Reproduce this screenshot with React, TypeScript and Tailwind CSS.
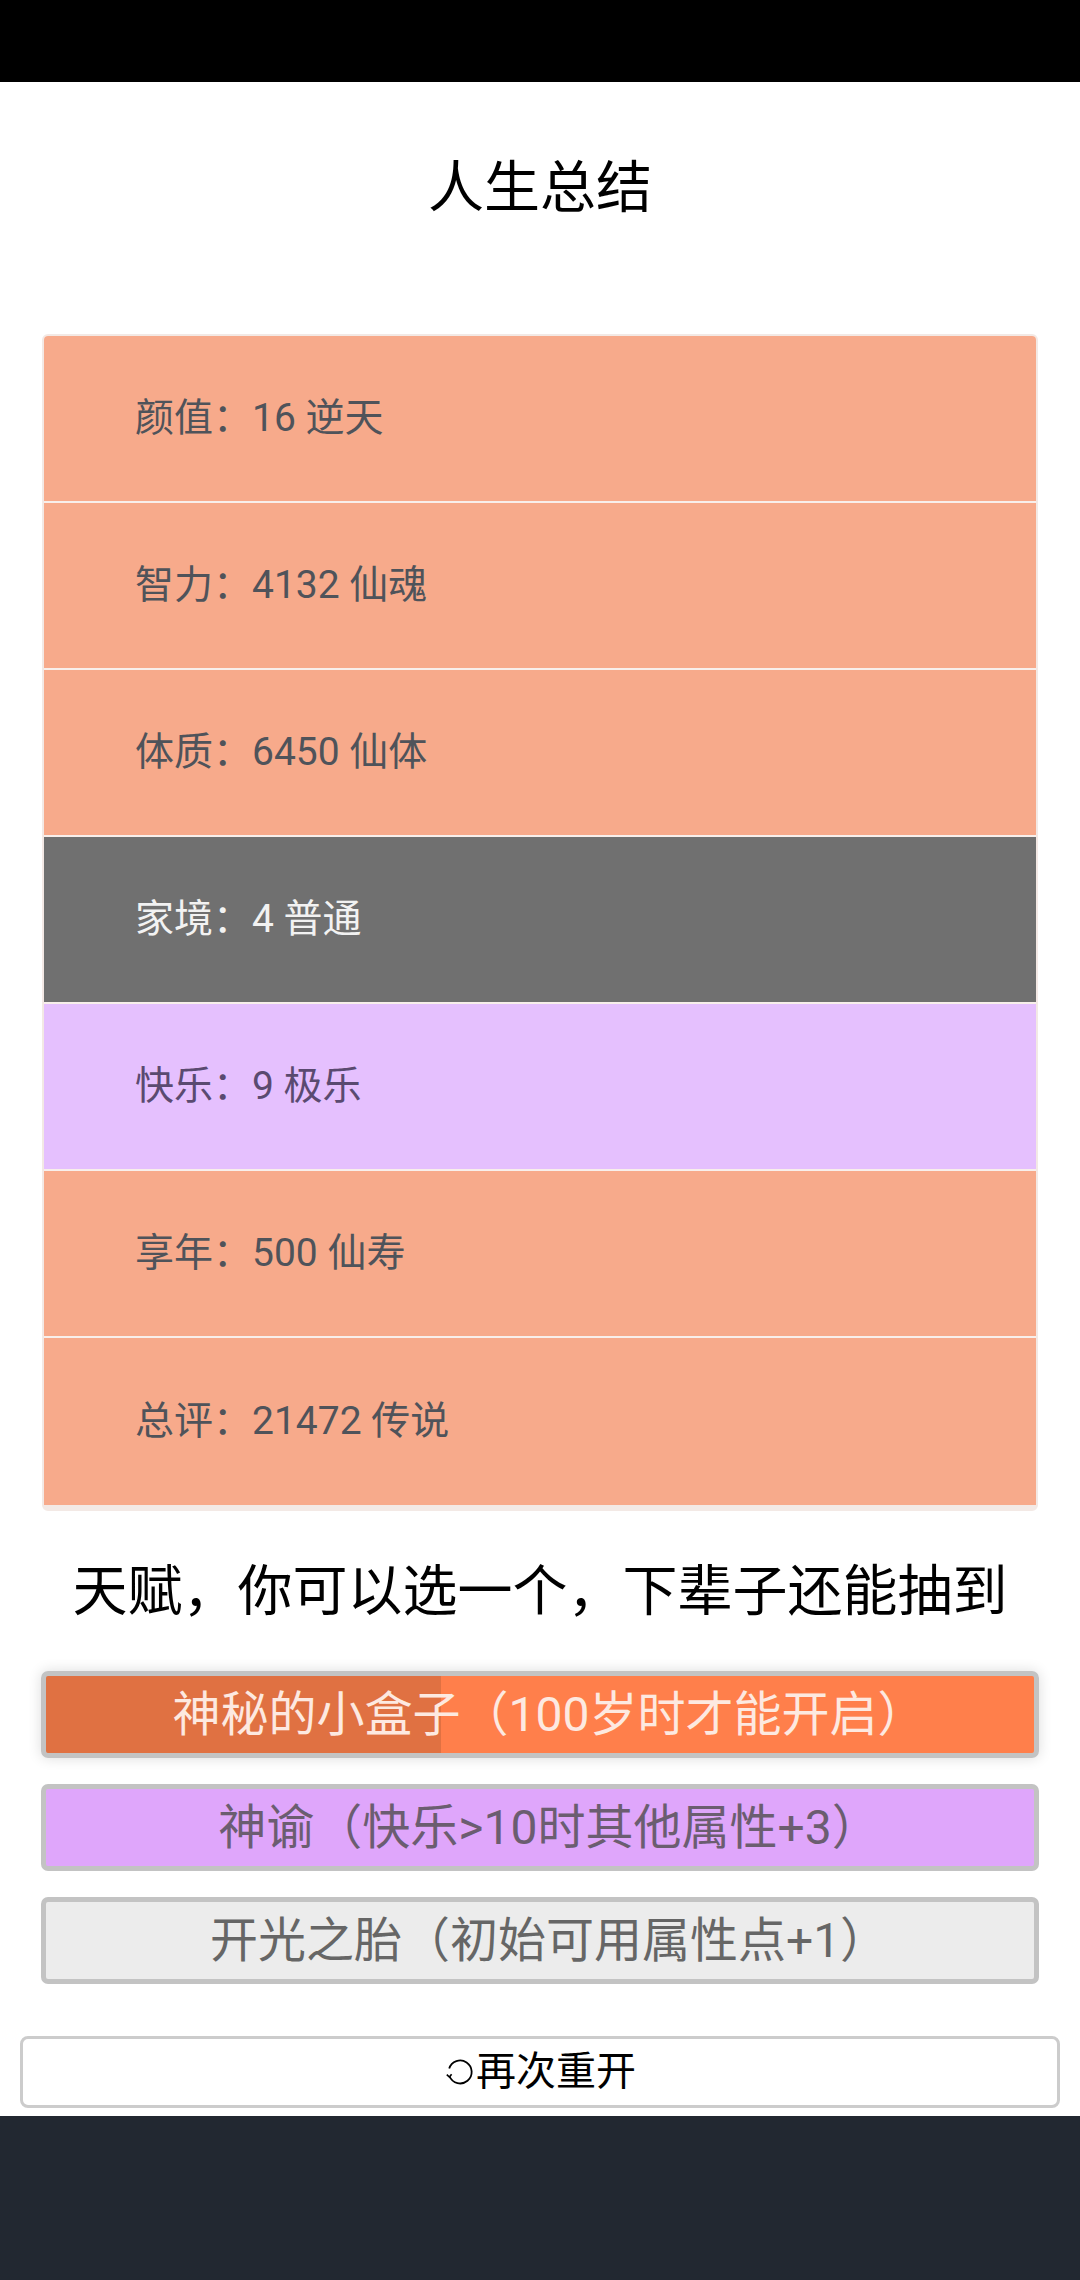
import React from "react";

const rows: { label: string; bg: string; text: string }[] = [
  { label: "颜值：16 逆天", bg: "bg-[#f7aa8b]", text: "text-[#4f535a]" },
  { label: "智力：4132 仙魂", bg: "bg-[#f7aa8b]", text: "text-[#4f535a]" },
  { label: "体质：6450 仙体", bg: "bg-[#f7aa8b]", text: "text-[#4f535a]" },
  { label: "家境：4 普通", bg: "bg-[#707070]", text: "text-[#f2f2f2]" },
  { label: "快乐：9 极乐", bg: "bg-[#e5c0fe]", text: "text-[#5a4a70]" },
  { label: "享年：500 仙寿", bg: "bg-[#f7aa8b]", text: "text-[#4f535a]" },
  { label: "总评：21472 传说", bg: "bg-[#f7aa8b]", text: "text-[#4f535a]" },
];

function RestartIcon() {
  return (
    <svg width="32" height="32" viewBox="0 0 32 32" fill="none" className="shrink-0">
      <path
        d="M5.2 12.5 A11.5 11.5 0 1 1 5.6 20.5"
        stroke="#000"
        strokeWidth="1.8"
        fill="none"
      />
      <path d="M2.8 18.6 L5.4 21 L7.6 18.2" stroke="#000" strokeWidth="1.6" fill="none" />
    </svg>
  );
}

export default function App() {
  return (
    <div className="min-h-[2280px] flex flex-col bg-white font-['Roboto','Noto_Sans_CJK_SC',sans-serif]">
      <div className="h-[82px] bg-black shrink-0" />
      <div className="h-[212px] flex items-center justify-center shrink-0">
        <h1 className="text-[56px] leading-none font-normal text-black">人生总结</h1>
      </div>
      <div className="mt-[40px] mx-[42px] rounded-[6px] border-2 border-b-[6px] border-[#f3e9e5] overflow-hidden flex flex-col">
        {rows.map((r, i) => (
          <div
            key={i}
            className={`${r.bg} ${r.text} h-[167px] flex items-center pl-[91px] text-[39px] leading-none ${
              i < rows.length - 1 ? "border-b-2 border-[#f8efeb]" : ""
            }`}
          >
            {r.label}
          </div>
        ))}
      </div>
      <div className="h-[160px] flex items-center justify-center shrink-0">
        <h2 className="text-[55px] leading-none font-normal text-black">天赋，你可以选一个，下辈子还能抽到</h2>
      </div>
      <div className="mx-[41px] flex flex-col gap-[26px]">
        <div className="h-[87px] pl-[18px] rounded-[7px] border-[5px] border-[#c3c3c3] bg-[linear-gradient(to_right,#e07142_40%,#ff7f4b_40%)] shadow-[0_0_14px_rgba(0,0,0,0.14)] flex items-center justify-center text-[48px] leading-none text-[#fde9e0]">
          神秘的小盒子（100岁时才能开启）
        </div>
        <div className="h-[87px] pl-[18px] rounded-[7px] border-[5px] border-[#c3c3c3] bg-[#dfa6fb] flex items-center justify-center text-[48px] leading-none text-[#6b5d70]">
          神谕（快乐&gt;10时其他属性+3）
        </div>
        <div className="h-[87px] pl-[18px] rounded-[7px] border-[5px] border-[#c3c3c3] bg-[#ececec] flex items-center justify-center text-[48px] leading-none text-[#666666]">
          开光之胎（初始可用属性点+1）
        </div>
      </div>
      <div className="mt-[52px] mx-[20px] h-[72px] rounded-[8px] border-[3px] border-[#cccccc] bg-white flex items-center justify-center text-[40px] leading-none text-black">
        <RestartIcon />
        <span>再次重开</span>
      </div>
      <div className="mt-[8px] flex-1 bg-[#222831]" />
    </div>
  );
}
